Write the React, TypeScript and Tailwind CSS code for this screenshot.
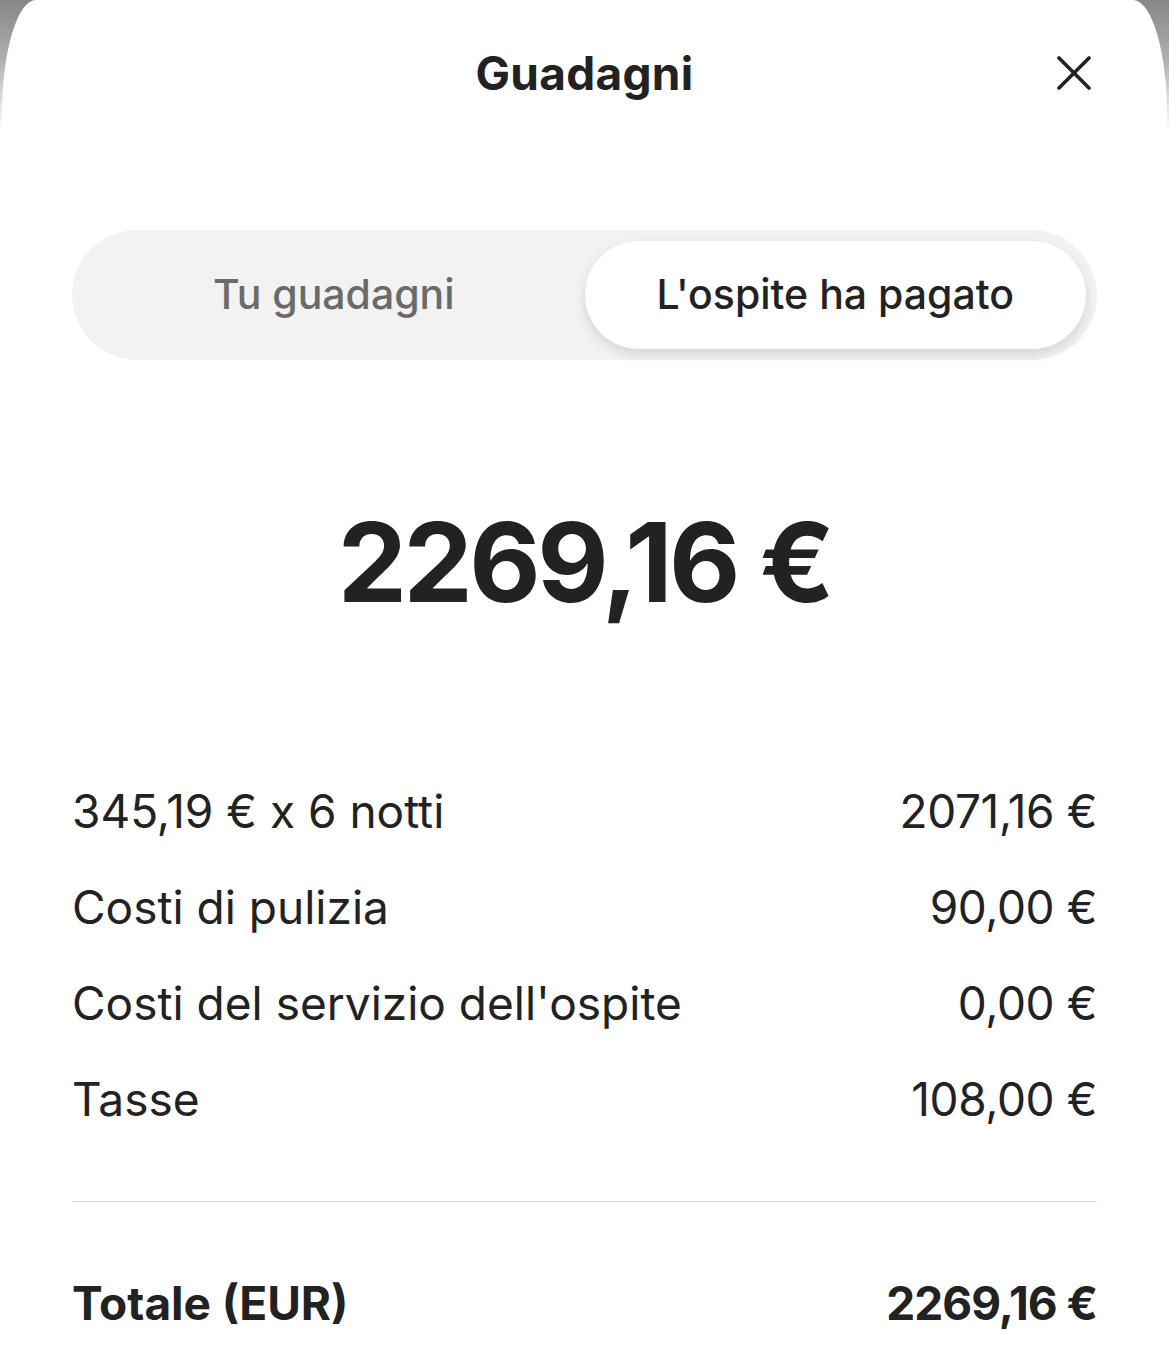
import React from "react";

const rows: [string, string][] = [
  ["345,19 € x 6 notti", "2071,16 €"],
  ["Costi di pulizia", "90,00 €"],
  ["Costi del servizio dell'ospite", "0,00 €"],
  ["Tasse", "108,00 €"],
];

export default function App() {
  return (
    <div
      className="w-[1169px] h-[1371px] overflow-hidden bg-[linear-gradient(to_bottom,#868686_0px,#b0b0b0_60px,#ffffff_130px)] text-[#222222]"
      style={{ fontFamily: "Inter, 'Noto Sans', sans-serif" }}
    >
      <div className="mx-[2px] h-full bg-white rounded-tl-[34px_115px] rounded-tr-[34px_115px] px-[70px]">
        <div className="h-[146px] grid grid-cols-[1fr_auto_1fr] items-center">
          <div />
          <div className="text-[46px] font-bold tracking-[0.3px]">Guadagni</div>
          <div className="flex justify-end pr-[6px]">
            <svg width="34" height="34" viewBox="0 0 34 34" fill="none" stroke="#222" strokeWidth="3.6" strokeLinecap="round">
              <path d="M2 2 L32 32 M32 2 L2 32" />
            </svg>
          </div>
        </div>

        <div className="mt-[84px] h-[130px] rounded-full bg-[#f2f2f2] p-[11px] grid grid-cols-2">
          <div className="flex items-center justify-center text-[41px] font-medium text-[#6a6a6a]">
            Tu guadagni
          </div>
          <div className="flex items-center justify-center rounded-full bg-white shadow-[0_5px_12px_rgba(0,0,0,0.13)] text-[41px] font-medium">
            L'ospite ha pagato
          </div>
        </div>

        <div className="h-[403px] flex items-center justify-center">
          <div className="text-[110px] font-bold leading-none tracking-[-3.5px]">2269,16 €</div>
        </div>

        <div className="flex flex-col">
          {rows.map(([l, r]) => (
            <div key={l} className="h-[96px] flex items-center justify-between text-[46px]">
              <span>{l}</span>
              <span className="tracking-[-0.4px]">{r}</span>
            </div>
          ))}
        </div>

        <div className="mt-[54px] h-px bg-[#dddddd]" />

        <div className="mt-[53px] h-[96px] flex items-center justify-between text-[46px] font-bold">
          <span>Totale (EUR)</span>
          <span className="tracking-[-1px]">2269,16 €</span>
        </div>
      </div>
    </div>
  );
}
